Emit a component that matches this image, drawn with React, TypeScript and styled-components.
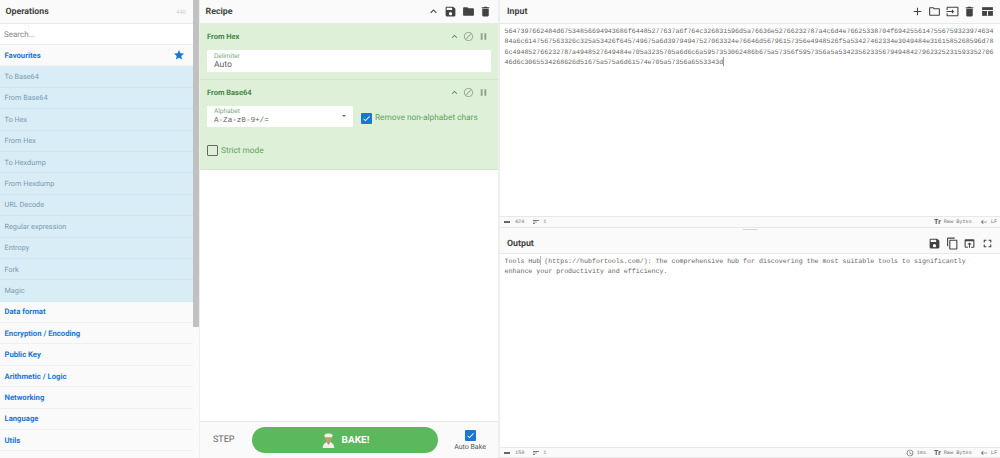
import React from "react";
import styled, { createGlobalStyle } from "styled-components";
import {
  MdAccessTime,
  MdAdd,
  MdBlock,
  MdCheck,
  MdContentCopy,
  MdDelete,
  MdFolder,
  MdFullscreen,
  MdInput,
  MdKeyboardArrowUp,
  MdKeyboardBackspace,
  MdOpenInBrowser,
  MdOutlineFolder,
  MdPause,
  MdSave,
  MdSort,
  MdStar,
} from "react-icons/md";

const favourites = [
  "To Base64",
  "From Base64",
  "To Hex",
  "From Hex",
  "To Hexdump",
  "From Hexdump",
  "URL Decode",
  "Regular expression",
  "Entropy",
  "Fork",
  "Magic",
];

const categories = [
  "Data format",
  "Encryption / Encoding",
  "Public Key",
  "Arithmetic / Logic",
  "Networking",
  "Language",
  "Utils",
];

const hexLines = [
  "564739766248" + "4d675348566949436" + "86f64485277637a6f764c326831596d5a76636e52766232787a4c6d4e76625338704f6942556147556759323974" + "634",
  "84a6c6147567563326c325a53426f645749675a6d39794947527063324e76646d56796157356e4948526f5a53427462334e3049484e316158526" + "8596d78",
  "6c4948527662" + "32787a4948527649484e705a3235705a6d6c6a5957353062486b675a57356f5957356a5a53423562335679494842796232523159335270" + "6",
];
const lastHexLine = "46d6c30655342686" + "26d51675a575a6d61574e705a57356a6553343d";

const GlobalStyle = createGlobalStyle`
  html, body, #root {
    margin: 0;
    height: 100%;
    overflow: hidden;
  }
  body {
    font-family: "Roboto", "Liberation Sans", sans-serif;
    background: #fff;
    text-rendering: geometricPrecision;
  }
`;

const Page = styled.div`
  display: grid;
  grid-template-columns: 199px 301px 500px;
  height: 458px;
  width: 1000px;
`;

const Sidebar = styled.aside`
  display: flex;
  height: 458px;
  background: #fafafa;
  overflow: hidden;
`;

const SideColumn = styled.div`
  width: 193px;
  display: flex;
  flex-direction: column;
`;

const Scrollbar = styled.div`
  width: 6px;
  height: 327px;
  background: #c1c1c1;
`;

const PaneHeader = styled.div<{ $height?: number }>`
  height: ${({ $height }) => $height ?? 24}px;
  box-sizing: border-box;
  flex: none;
  display: flex;
  align-items: center;
  justify-content: space-between;
  padding: 1px 6px 0 5.5px;
  background: #fafafa;
  border-bottom: 1px solid #e8e8e8;
  font-size: 8.8px;
  font-weight: 700;
  color: #424242;
`;

const IoHeader = styled(PaneHeader)`
  padding: 1px 6.5px 0 7px;
`;

const OpCount = styled.span`
  font-size: 6px;
  font-weight: 400;
  color: #d0d0d0;
  margin-right: 1px;
`;

const Search = styled.div`
  height: 21px;
  box-sizing: border-box;
  flex: none;
  display: flex;
  align-items: center;
  padding: 1px 0 0 4px;
  background: #fff;
  border-bottom: 1px solid #eee;
  font-size: 8px;
  color: #8a8a8a;
`;

const Category = styled.div`
  height: 21.4px;
  box-sizing: border-box;
  flex: none;
  display: flex;
  align-items: center;
  justify-content: space-between;
  padding: 0 8px 0 4.5px;
  background: #fafafa;
  border-bottom: 1px solid #f0f0f0;
  font-size: 7.7px;
  font-weight: 700;
  color: #1976d2;
`;

const Operation = styled.div`
  height: 21.4px;
  box-sizing: border-box;
  flex: none;
  display: flex;
  align-items: center;
  padding-left: 4.5px;
  background: #d9edf7;
  border-bottom: 1px solid #cfe7f3;
  font-size: 7.3px;
  color: #7a9bb0;
`;

const RecipePane = styled.section`
  display: flex;
  flex-direction: column;
  height: 458px;
  background: #fff;
  border-left: 1px solid #eee;
  border-right: 2px solid #eee;
  box-sizing: border-box;
`;

const IconRow = styled.div<{ $gap: number }>`
  display: flex;
  align-items: center;
  gap: ${({ $gap }) => $gap}px;
  color: #424242;
`;

const HeaderIcons = styled(IconRow)`
  margin-top: -1px;
`;

const RecipeCard = styled.div<{ $height: number }>`
  height: ${({ $height }) => $height}px;
  box-sizing: border-box;
  flex: none;
  padding: 0 7px;
  background: #dff0d8;
  border-bottom: 1px solid #d3e6cb;
  color: #468847;
`;

const CardTitle = styled.div`
  height: 26px;
  box-sizing: border-box;
  padding: 0 2.5px 2px 0;
  display: flex;
  align-items: center;
  justify-content: space-between;
  font-size: 7.5px;
  font-weight: 700;
`;

const FieldLabel = styled.div`
  font-size: 6.5px;
  line-height: 7px;
  color: #7aa87a;
`;

const TextField = styled.div`
  height: 22px;
  box-sizing: border-box;
  padding: 2.5px 7px 0;
  background: #fff;
  border-radius: 1px;
  font-size: 8.6px;
  line-height: 11px;
  color: #5f5f5f;
`;

const OptionRow = styled.div`
  display: flex;
  align-items: center;
  gap: 3px;
`;

const SelectField = styled.div`
  position: relative;
  width: 146px;
  height: 21px;
  box-sizing: border-box;
  margin-right: 5px;
  padding: 2px 7px 0;
  background: #fff;
  border-radius: 1px;
  font-family: "Liberation Mono", monospace;
  font-size: 7.6px;
  line-height: 10px;
  color: #5f5f5f;

  &::after {
    content: "";
    position: absolute;
    right: 7px;
    top: 9px;
    border: 2px solid transparent;
    border-top: 2.5px solid #666;
  }
`;

const SelectLabel = styled(FieldLabel)`
  font-family: "Roboto", sans-serif;
  margin-bottom: 1px;
`;

const CheckedBox = styled.span<{ $offset?: number }>`
  width: 11px;
  height: 11px;
  flex: none;
  display: flex;
  align-items: center;
  justify-content: center;
  margin-top: ${({ $offset }) => $offset ?? 0}px;
  background: #1976d2;
  border-radius: 1px;
  color: #fff;
`;

const EmptyBox = styled.span`
  width: 11px;
  height: 11px;
  flex: none;
  box-sizing: border-box;
  border: 1.5px solid #666;
  border-radius: 1px;
`;

const CheckLabel = styled.span<{ $offset?: number }>`
  margin-top: ${({ $offset }) => $offset ?? 0}px;
  font-size: 8.3px;
  color: #5fa461;
`;

const StrictRow = styled.div`
  display: flex;
  align-items: center;
  gap: 3px;
  margin-top: 18px;
`;

const RecipeSpacer = styled.div`
  flex: 1;
`;

const BakeBar = styled.div`
  height: 37px;
  flex: none;
  display: flex;
  align-items: center;
  padding-left: 13px;
  background: #fafafa;
  border-top: 1px solid #e8e8e8;
  box-sizing: border-box;
`;

const StepLabel = styled.span`
  width: 39px;
  font-size: 9px;
  color: #666;
`;

const BakeButton = styled.div`
  width: 186px;
  height: 26px;
  display: flex;
  align-items: center;
  justify-content: center;
  gap: 6px;
  border-radius: 13px;
  background: #5cb85c;
  color: #fff;
  font-size: 10px;
  font-weight: 700;
`;

const AutoBake = styled.div`
  width: 48px;
  margin-left: 8px;
  display: flex;
  flex-direction: column;
  align-items: center;
  gap: 2px;
  font-size: 7px;
  color: #555;
`;

const IoPane = styled.section`
  display: grid;
  grid-template-columns: minmax(0, 1fr);
  grid-template-rows: 228px 5px 225px;
  height: 458px;
  min-width: 0;
`;

const IoColumn = styled.div`
  display: flex;
  flex-direction: column;
  min-height: 0;
  min-width: 0;
`;

const Gutter = styled.div`
  display: flex;
  justify-content: center;
  background: #fafafa;

  &::after {
    content: "";
    width: 14px;
    height: 1px;
    margin-top: 1px;
    background: #d4d4d4;
  }
`;

const TextArea = styled.div`
  flex: 1;
  box-sizing: border-box;
  padding: 2px 0 0 4.5px;
  background: #fff;
  overflow: hidden;
  font-family: "Liberation Mono", monospace;
  font-size: 6.63px;
  line-height: 10.3px;
  color: #666;
  white-space: pre;
`;

const TextLine = styled.div`
  height: 10.3px;
`;

const Caret = styled.span<{ $color: string }>`
  position: relative;

  &::after {
    content: "";
    position: absolute;
    left: 0;
    top: -1px;
    width: 1px;
    height: 9px;
    background: ${({ $color }) => $color};
  }
`;

const StatusBar = styled.div<{ $height: number }>`
  height: ${({ $height }) => $height}px;
  box-sizing: border-box;
  flex: none;
  display: flex;
  align-items: center;
  justify-content: space-between;
  padding: 0 3px 0 4px;
  background: #fafafa;
  border-top: 1px solid #e8e8e8;
  border-bottom: 1px solid #e8e8e8;
  font-family: "Liberation Mono", monospace;
  font-size: 5.2px;
  color: #777;
`;

const StatusGroup = styled.div`
  display: flex;
  align-items: center;
  gap: 8px;
`;

const StatusItem = styled.span`
  display: flex;
  align-items: center;
  gap: 3px;
`;

const LengthGlyph = styled.span`
  width: 6px;
  height: 2px;
  margin-right: 2px;
  background: #666;
`;

const TypeGlyph = styled.span`
  font-family: "Roboto", sans-serif;
  font-size: 7px;
  font-weight: 700;
  color: #555;
`;

const Chef = () => (
  <svg width="15" height="16" viewBox="0 0 14 15" aria-hidden="true">
    <path d="M3.5 2.5c.3-1.6 6.7-1.6 7 0 .9.4.7 1.6-.3 1.8v1H3.8v-1c-1-.2-1.2-1.4-.3-1.8z" fill="#f3f1ec" />
    <path d="M4.5 5h5v2.4c0 1.3-1 2-2.5 2s-2.5-.7-2.5-2z" fill="#c99a6b" />
    <path d="M1.5 15c.2-3 1.8-5 4-5.6L7 11l1.5-1.6c2.2.6 3.8 2.6 4 5.6z" fill="#f1efe8" />
    <path d="M6 9.5h2v1.6L7 12l-1-.9z" fill="#b9865a" />
  </svg>
);

const LayoutIcon = () => (
  <svg width="13" height="13" viewBox="0 0 24 24" aria-hidden="true">
    <path d="M2 4h20v16H2z" fill="#424242" />
    <path d="M2 10h20M12 10v10" stroke="#fafafa" strokeWidth="2" />
  </svg>
);

const CardControls = () => (
  <IconRow $gap={3.5}>
    <MdKeyboardArrowUp size={11} color="#5c7f5c" />
    <MdBlock size={11} color="#9aa99a" />
    <MdPause size={11} color="#8f9f8f" />
  </IconRow>
);

const LengthStat = ({ value }: { value: string }) => (
  <StatusItem>
    <LengthGlyph />
    {value}
  </StatusItem>
);

const LinesStat = () => (
  <StatusItem>
    <MdSort size={8} color="#555" />1
  </StatusItem>
);

const FormatStats = () => (
  <>
    <StatusItem>
      <TypeGlyph>Tr</TypeGlyph>
      Raw Bytes
    </StatusItem>
    <StatusItem>
      <MdKeyboardBackspace size={8} color="#555" />
      LF
    </StatusItem>
  </>
);

export default function App() {
  return (
    <>
      <GlobalStyle />
      <Page>
        <Sidebar>
          <SideColumn>
            <PaneHeader>
              Operations
              <OpCount>440</OpCount>
            </PaneHeader>
            <Search>Search...</Search>
            <Category>
              Favourites
              <MdStar size={12} />
            </Category>
            {favourites.map((name) => (
              <Operation key={name}>{name}</Operation>
            ))}
            {categories.map((name) => (
              <Category key={name}>{name}</Category>
            ))}
          </SideColumn>
          <Scrollbar />
        </Sidebar>

        <RecipePane>
          <PaneHeader>
            Recipe
            <HeaderIcons $gap={4.5}>
              <MdKeyboardArrowUp size={13} />
              <MdSave size={13} />
              <MdFolder size={13} />
              <MdDelete size={13} />
            </HeaderIcons>
          </PaneHeader>
          <RecipeCard $height={56}>
            <CardTitle>
              From Hex
              <CardControls />
            </CardTitle>
            <TextField>
              <FieldLabel>Delimiter</FieldLabel>
              Auto
            </TextField>
          </RecipeCard>
          <RecipeCard $height={90}>
            <CardTitle>
              From Base64
              <CardControls />
            </CardTitle>
            <OptionRow>
              <SelectField>
                <SelectLabel>Alphabet</SelectLabel>
                A-Za-z0-9+/=
              </SelectField>
              <CheckedBox $offset={3}>
                <MdCheck size={9} />
              </CheckedBox>
              <CheckLabel $offset={3}>Remove non-alphabet chars</CheckLabel>
            </OptionRow>
            <StrictRow>
              <EmptyBox />
              <CheckLabel>Strict mode</CheckLabel>
            </StrictRow>
          </RecipeCard>
          <RecipeSpacer />
          <BakeBar>
            <StepLabel>STEP</StepLabel>
            <BakeButton>
              <Chef />
              BAKE!
            </BakeButton>
            <AutoBake>
              <CheckedBox>
                <MdCheck size={9} />
              </CheckedBox>
              Auto Bake
            </AutoBake>
          </BakeBar>
        </RecipePane>

        <IoPane>
          <IoColumn>
            <IoHeader>
              Input
              <HeaderIcons $gap={4.5}>
                <MdAdd size={13} />
                <MdOutlineFolder size={13} />
                <MdInput size={13} />
                <MdDelete size={13} />
                <LayoutIcon />
              </HeaderIcons>
            </IoHeader>
            <TextArea>
              {hexLines.map((line) => (
                <TextLine key={line}>{line}</TextLine>
              ))}
              <TextLine>
                {lastHexLine}
                <Caret $color="#999" />
              </TextLine>
            </TextArea>
            <StatusBar $height={12}>
              <StatusGroup>
                <LengthStat value="424" />
                <LinesStat />
              </StatusGroup>
              <StatusGroup>
                <FormatStats />
              </StatusGroup>
            </StatusBar>
          </IoColumn>
          <Gutter />
          <IoColumn>
            <IoHeader $height={21}>
              Output
              <HeaderIcons $gap={4.5}>
                <MdSave size={13} />
                <MdContentCopy size={13} />
                <MdOpenInBrowser size={13} />
                <MdFullscreen size={13} />
              </HeaderIcons>
            </IoHeader>
            <TextArea>
              <TextLine>
                Tools Hub
                <Caret $color="#bbb" />
                {" (https://hubfortools.com/): The comprehensive hub for discovering the most suitable tools to significantly"}
              </TextLine>
              <TextLine>enhance your productivity and efficiency.</TextLine>
            </TextArea>
            <StatusBar $height={11}>
              <StatusGroup>
                <LengthStat value="158" />
                <LinesStat />
              </StatusGroup>
              <StatusGroup>
                <StatusItem>
                  <MdAccessTime size={8} color="#555" />
                  1ms
                </StatusItem>
                <FormatStats />
              </StatusGroup>
            </StatusBar>
          </IoColumn>
        </IoPane>
      </Page>
    </>
  );
}
